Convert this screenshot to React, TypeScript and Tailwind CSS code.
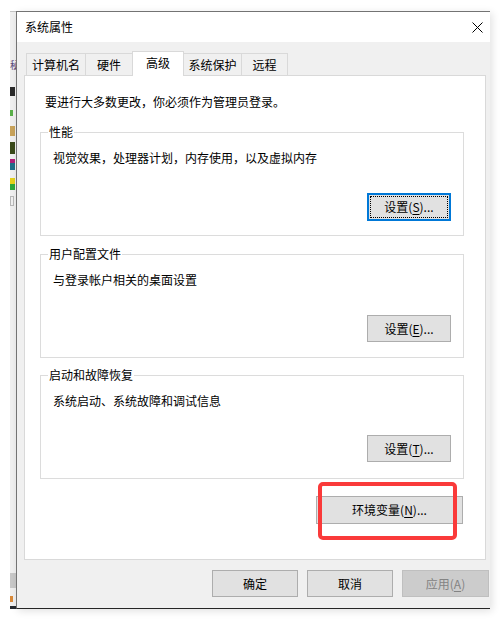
import React from 'react';

const Key: React.FC<{ k: string }> = ({ k }) => (
  <span className="underline underline-offset-[2px] decoration-[1px]">{k}</span>
);

interface BtnProps {
  children: React.ReactNode;
  className?: string;
  focused?: boolean;
  disabled?: boolean;
}

const Btn: React.FC<BtnProps> = ({ children, className = '', focused, disabled }) => {
  if (focused) {
    return (
      <button className={`h-[28px] border-2 border-[#0078d7] bg-[#e1e1e1] p-[1px] ${className}`}>
        <div className="h-full w-full border border-dotted border-black flex items-center justify-center leading-none">
          {children}
        </div>
      </button>
    );
  }
  return (
    <button
      className={`h-[27px] border flex items-center justify-center leading-none ${
        disabled ? 'bg-[#cccccc] border-[#bfbfbf] text-[#838383]' : 'bg-[#e1e1e1] border-[#adadad] text-black'
      } ${className}`}
    >
      {children}
    </button>
  );
};

const tabs = [
  { label: '计算机名', w: 'w-[60px]' },
  { label: '硬件', w: 'w-[48px]' },
  { label: '高级', w: 'w-[52px]', active: true },
  { label: '系统保护', w: 'w-[59px]' },
  { label: '远程', w: 'w-[47px]' },
];

const Group: React.FC<{ title: string; text: string; children: React.ReactNode }> = ({ title, text, children }) => (
  <div className="h-[104px] ml-[15px] w-[424px] border border-[#dcdcdc] flex flex-col">
    <span className="-mt-[9px] ml-[7px] px-[1px] self-start h-[16px] leading-[16px] bg-white">{title}</span>
    <p className="mt-[10px] pl-[12px] h-[16px] leading-[16px]">{text}</p>
    <div className="mt-[27px] flex justify-end pr-[12px]">{children}</div>
  </div>
);

// bits of the window behind the dialog
const BackWindow: React.FC = () => (
  <div className="w-[6px] h-[598px] flex flex-col bg-[#f0f0f0] border-t border-[#c4c4c4]">
    <div className="mt-[48px] h-[10px] text-[10px] leading-[10px] text-[#5b4a7a] overflow-hidden">秘</div>
    <div className="mt-[17px] h-[9px] w-[5px] bg-[#2a2a2a]" />
    <div className="mt-[14px] h-[6px] w-[3px] bg-[#5bb04a]" />
    <div className="mt-[10px] h-[10px] w-[5px] bg-[#c9a35a]" />
    <div className="mt-[6px] h-[12px] w-[5px] bg-[#3a4a1a]" />
    <div className="mt-[5px] h-[4px] w-[5px] bg-[#b0217a]" />
    <div className="h-[7px] w-[5px] bg-[#1f6f8a]" />
    <div className="mt-[8px] h-[6px] w-[5px] bg-[#e5d21a]" />
    <div className="h-[6px] w-[5px] bg-[#2fa83a]" />
    <div className="mt-[6px] h-[10px] w-[4px] border border-[#b8b8b8]" />
    <div className="mt-auto h-[15px] w-[6px] bg-[#c8c8c8]" />
    <div className="mt-[8px] h-[6px] w-[3px] bg-[#d98a3a]" />
    <div className="mt-[4px] h-[3px] w-[6px] bg-[#262a30]" />
  </div>
);

export default function App() {
  return (
    <div className="w-[501px] h-[620px] bg-white flex pt-[11px] overflow-hidden text-[12px] text-black font-['Noto_Sans_CJK_SC','Microsoft_YaHei',sans-serif]">
      <div className="w-[10px]" />
      <BackWindow />
      <div className="w-[474px] h-[598px] flex flex-col bg-[#f0f0f0] border-l border-t border-[#737373] border-b border-b-[#262626] shadow-[2px_2px_8px_rgba(0,0,0,0.12)]">
        {/* title bar */}
        <div className="h-[30px] bg-white flex items-center justify-between pl-[8px] pr-[7px]">
          <span className="leading-[16px]">系统属性</span>
          <svg width="11" height="11" viewBox="0 0 11 11">
            <path d="M0.5 0.5 L10.5 10.5 M10.5 0.5 L0.5 10.5" stroke="#000" strokeWidth="1" fill="none" />
          </svg>
        </div>

        {/* body */}
        <div className="flex-1 flex flex-col pl-[7px]">
          <div className="mt-[9px] ml-[2px] h-[24px] flex items-end">
            {tabs.map((t, i) =>
              t.active ? (
                <div
                  key={t.label}
                  className={`${t.w} h-[25px] -mb-[1px] -ml-[1px] relative z-10 bg-white border border-b-0 border-[#d9d9d9] flex items-start justify-center pt-[3px] leading-[16px]`}
                >
                  {t.label}
                </div>
              ) : (
                <div
                  key={t.label}
                  className={`${t.w} h-[22px] ${i > 0 ? '-ml-[1px]' : ''} bg-[#f0f0f0] border border-b-0 border-[#d9d9d9] flex items-center justify-center leading-[16px]`}
                >
                  {t.label}
                </div>
              )
            )}
          </div>

          <div className="w-[462px] h-[485px] bg-white border border-[#d9d9d9] flex flex-col">
            <p className="mt-[18px] pl-[20px] h-[16px] leading-[16px]">要进行大多数更改，你必须作为管理员登录。</p>

            <div className="mt-[22px]">
              <Group title="性能" text="视觉效果，处理器计划，内存使用，以及虚拟内存">
                <Btn focused className="w-[84px]">
                  设置(<Key k="S" />)...
                </Btn>
              </Group>
            </div>
            <div className="mt-[18px]">
              <Group title="用户配置文件" text="与登录帐户相关的桌面设置">
                <Btn className="w-[84px]">
                  设置(<Key k="E" />)...
                </Btn>
              </Group>
            </div>
            <div className="mt-[17px]">
              <Group title="启动和故障恢复" text="系统启动、系统故障和调试信息">
                <Btn className="w-[84px] -mt-[1px]">
                  设置(<Key k="T" />)...
                </Btn>
              </Group>
            </div>

            <div className="mt-[17px] flex justify-end pr-[22px]">
              <div className="relative">
                <Btn className="w-[147px] h-[28px]">
                  环境变量(<Key k="N" />)...
                </Btn>
                {/* red highlight drawn over the button */}
                <div className="absolute left-[2px] -top-[14px] w-[139px] h-[58px] border-[4px] border-[#fa3a3a] rounded-[5px]" />
              </div>
            </div>
          </div>

          <div className="mt-[10px] ml-[188px] flex gap-[9px]">
            <Btn className="w-[86px]">确定</Btn>
            <Btn className="w-[86px]">取消</Btn>
            <Btn disabled className="w-[87px]">
              应用(<Key k="A" />)
            </Btn>
          </div>
        </div>
      </div>
    </div>
  );
}
